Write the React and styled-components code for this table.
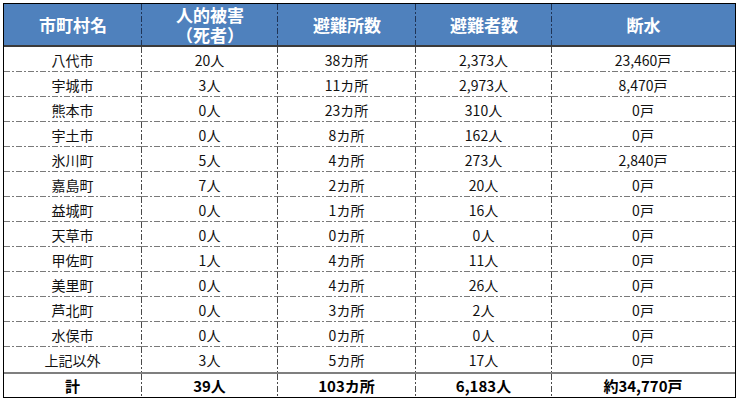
import React from "react";
import styled, { createGlobalStyle, css } from "styled-components";

const Global = createGlobalStyle`
  html, body { margin: 0; padding: 0; background: #fff; }
  body { font-family: "Noto Sans CJK JP", "Noto Sans", sans-serif; }
`;

const Page = styled.div`
  padding: 3px;
`;

const Table = styled.div`
  width: 731px;
  border: 1px solid #000;
  display: grid;
  grid-template-columns: 138px 136px 138px 136px 183px;
`;

const dashH = (c) =>
  `repeating-linear-gradient(to right, ${c} 0 6px, transparent 6px 8px, ${c} 8px 10px, transparent 10px 12px)`;
const dashV = (c) =>
  `repeating-linear-gradient(to bottom, ${c} 0 6px, transparent 6px 8px, ${c} 8px 10px, transparent 10px 12px)`;

const lines = ({ $h, $v }) => {
  const imgs = [];
  const sizes = [];
  const pos = [];
  if ($h) {
    imgs.push(dashH($h));
    sizes.push("100% 1px");
    pos.push("left bottom");
  }
  if ($v) {
    imgs.push(dashV($v));
    sizes.push("1px 100%");
    pos.push("right top");
  }
  if (!imgs.length) return "";
  return css`
    background-image: ${imgs.join(", ")};
    background-size: ${sizes.join(", ")};
    background-position: ${pos.join(", ")};
    background-repeat: no-repeat;
  `;
};

const HeadCell = styled.div`
  height: 41px;
  background-color: #4f81bd;
  border-bottom: 2px solid #3b3b3b;
  color: #fff;
  font-weight: 700;
  font-size: 17px;
  line-height: 20px;
  display: flex;
  flex-direction: column;
  align-items: center;
  justify-content: center;
  text-align: center;
  ${lines}
`;

const Cell = styled.div`
  height: 25px;
  box-sizing: border-box;
  display: flex;
  align-items: center;
  justify-content: center;
  font-size: 14px;
  color: #111;
  padding-right: 1px;
  ${lines}
`;

const TotalCell = styled(Cell)`
  height: 25px;
  border-top: 2px solid #7f7f7f;
  font-weight: 700;
  font-size: 15px;
  color: #000;
`;

const headers = [["市町村名"], ["人的被害", "（死者）"], ["避難所数"], ["避難者数"], ["断水"]];

const rows = [
  ["八代市", "20人", "38カ所", "2,373人", "23,460戸"],
  ["宇城市", "3人", "11カ所", "2,973人", "8,470戸"],
  ["熊本市", "0人", "23カ所", "310人", "0戸"],
  ["宇土市", "0人", "8カ所", "162人", "0戸"],
  ["氷川町", "5人", "4カ所", "273人", "2,840戸"],
  ["嘉島町", "7人", "2カ所", "20人", "0戸"],
  ["益城町", "0人", "1カ所", "16人", "0戸"],
  ["天草市", "0人", "0カ所", "0人", "0戸"],
  ["甲佐町", "1人", "4カ所", "11人", "0戸"],
  ["美里町", "0人", "4カ所", "26人", "0戸"],
  ["芦北町", "0人", "3カ所", "2人", "0戸"],
  ["水俣市", "0人", "0カ所", "0人", "0戸"],
  ["上記以外", "3人", "5カ所", "17人", "0戸"],
];

const total = ["計", "39人", "103カ所", "6,183人", "約34,770戸"];

const V = "#4a4a4a";
const H = "#7a7a7a";

export default function App() {
  return (
    <Page>
      <Global />
      <Table>
        {headers.map((h, i) => (
          <HeadCell key={"h" + i} $v={i < 4 ? "#1f3456" : null}>
            {h.map((l) => (
              <span key={l}>{l}</span>
            ))}
          </HeadCell>
        ))}
        {rows.map((r, ri) =>
          r.map((c, ci) => (
            <Cell
              key={ri + "-" + ci}
              $h={ri < rows.length - 1 ? H : null}
              $v={ci < 4 ? V : null}
            >
              {c}
            </Cell>
          ))
        )}
        {total.map((c, ci) => (
          <TotalCell key={"t" + ci} $v={ci < 4 ? V : null}>
            {c}
          </TotalCell>
        ))}
      </Table>
    </Page>
  );
}
